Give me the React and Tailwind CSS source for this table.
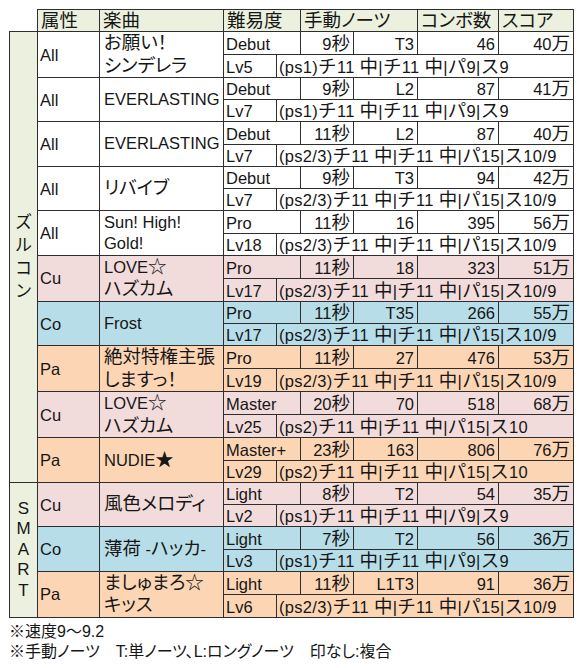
import React from 'react';

// cell fill per attribute
const FILL = {
  All: 'bg-white',
  Cu: 'bg-[#f2dcdb]',
  Co: 'bg-[#b7dee8]',
  Pa: 'bg-[#fcd5b4]',
};

const PS1 = '(ps1)チ11 中|チ11 中|パ9|ス9';
const PS23 = '(ps2/3)チ11 中|チ11 中|パ15|ス10/9';
const PS2 = '(ps2)チ11 中|チ11 中|パ15|ス10';

const ROWS = [
  { attr: 'All', song: ['お願い！', 'シンデレラ'], diff: 'Debut', sec: '9秒', notes: 'T3', combo: '46', score: '40万', lv: 'Lv5', memo: PS1 },
  { attr: 'All', song: ['EVERLASTING'], diff: 'Debut', sec: '9秒', notes: 'L2', combo: '87', score: '41万', lv: 'Lv7', memo: PS1 },
  { attr: 'All', song: ['EVERLASTING'], diff: 'Debut', sec: '11秒', notes: 'L2', combo: '87', score: '40万', lv: 'Lv7', memo: PS23 },
  { attr: 'All', song: ['リバイブ'], diff: 'Debut', sec: '9秒', notes: 'T3', combo: '94', score: '42万', lv: 'Lv7', memo: PS23 },
  { attr: 'All', song: ['Sun! High!', 'Gold!'], diff: 'Pro', sec: '11秒', notes: '16', combo: '395', score: '56万', lv: 'Lv18', memo: PS23 },
  { attr: 'Cu', song: ['LOVE☆', 'ハズカム'], diff: 'Pro', sec: '11秒', notes: '18', combo: '323', score: '51万', lv: 'Lv17', memo: PS23 },
  { attr: 'Co', song: ['Frost'], diff: 'Pro', sec: '11秒', notes: 'T35', combo: '266', score: '55万', lv: 'Lv17', memo: PS23 },
  { attr: 'Pa', song: ['絶対特権主張', 'しますっ！'], diff: 'Pro', sec: '11秒', notes: '27', combo: '476', score: '53万', lv: 'Lv19', memo: PS23 },
  { attr: 'Cu', song: ['LOVE☆', 'ハズカム'], diff: 'Master', sec: '20秒', notes: '70', combo: '518', score: '68万', lv: 'Lv25', memo: PS2 },
  { attr: 'Pa', song: ['NUDIE★'], diff: 'Master+', sec: '23秒', notes: '163', combo: '806', score: '76万', lv: 'Lv29', memo: PS2 },
  { attr: 'Cu', song: ['風色メロディ'], diff: 'Light', sec: '8秒', notes: 'T2', combo: '54', score: '35万', lv: 'Lv2', memo: PS1 },
  { attr: 'Co', song: ['薄荷 -ハッカ-'], diff: 'Light', sec: '7秒', notes: 'T2', combo: '56', score: '36万', lv: 'Lv3', memo: PS1 },
  { attr: 'Pa', song: ['ましゅまろ☆', 'キッス'], diff: 'Light', sec: '11秒', notes: 'L1T3', combo: '91', score: '36万', lv: 'Lv6', memo: PS23 },
];

const CJK = /([\u3000-\u30ff\u4e00-\u9fff\uff01-\uff5e☆★※]+)/;

// Japanese runs are set a bit larger than the latin ones, like the sheet's font
function T({ children, palt = false }) {
  return String(children)
    .split(CJK)
    .filter(Boolean)
    .map((part, i) =>
      CJK.test(part) ? (
        palt ? (
          <span key={i} className="text-[18.5px] [font-feature-settings:'palt']">{part}</span>
        ) : (
          <span key={i} className="text-[18.5px]">{part}</span>
        )
      ) : (
        <span key={i}>{part}</span>
      )
    );
}

const cell = 'border border-[#2e2e2e] px-[3px] py-0 whitespace-nowrap';

function SideLabel({ chars, leading }) {
  return (
    <div className={`flex flex-col items-center ${leading}`}>
      {chars.map((c, i) => (
        <span key={i}>{c}</span>
      ))}
    </div>
  );
}

export default function App() {
  return (
    <div className="w-[580px] h-[668px] bg-white pt-[9px] pl-[9px] text-[#161616] font-['Liberation_Sans','Noto_Sans_CJK_JP',sans-serif]">
      <table className="border-collapse table-fixed w-[564px] text-[16.5px] leading-[20px]">
        <colgroup>
          <col className="w-[28px]" />
          <col className="w-[62px]" />
          <col className="w-[124px]" />
          <col className="w-[53px]" />
          <col className="w-[24px]" />
          <col className="w-[53px]" />
          <col className="w-[64px]" />
          <col className="w-[81px]" />
          <col className="w-[75px]" />
        </colgroup>
        <thead>
          <tr className="h-[22px] bg-[#ebf1de]">
            <td className="bg-white p-0" />
            <td className={`${cell} text-left`}><T palt>属性</T></td>
            <td className={`${cell} text-left`}><T palt>楽曲</T></td>
            <td colSpan={2} className={`${cell} text-left`}><T palt>難易度</T></td>
            <td colSpan={2} className={`${cell} text-left`}><T palt>手動ノーツ</T></td>
            <td className={`${cell} text-left`}><T palt>コンボ数</T></td>
            <td className={`${cell} text-left`}><T palt>スコア</T></td>
          </tr>
        </thead>
        <tbody>
          {ROWS.map((r, i) => {
            const fill = FILL[r.attr];
            return (
              <React.Fragment key={i}>
                <tr className={`h-[22.3px] ${fill}`}>
                  {i === 0 && (
                    <td rowSpan={20} className="border border-[#2e2e2e] bg-[#ebf1de] p-0 align-middle text-[17px]">
                      <SideLabel chars={['ズ', 'ル', 'コ', 'ン']} leading="leading-[23px]" />
                    </td>
                  )}
                  {i === 10 && (
                    <td rowSpan={6} className="border border-[#2e2e2e] bg-[#ebf1de] p-0 align-middle text-[17px]">
                      <SideLabel chars={['S', 'M', 'A', 'R', 'T']} leading="leading-[20.5px]" />
                    </td>
                  )}
                  <td rowSpan={2} className={`${cell} align-middle pl-[2px]`}>{r.attr}</td>
                  <td rowSpan={2} className={`${cell} align-middle pl-[4px] leading-[21.5px]`}>
                    {r.song.map((s, k) => (
                      <div key={k}><T palt>{s}</T></div>
                    ))}
                  </td>
                  <td colSpan={2} className={`${cell} align-bottom pl-[2px]`}>{r.diff}</td>
                  <td className={`${cell} align-bottom text-right`}><T>{r.sec}</T></td>
                  <td className={`${cell} align-bottom text-right`}>{r.notes}</td>
                  <td className={`${cell} align-bottom text-right`}>{r.combo}</td>
                  <td className={`${cell} align-bottom text-right`}><T>{r.score}</T></td>
                </tr>
                <tr className={`h-[22.2px] ${fill}`}>
                  <td className={`${cell} align-bottom pl-[2px]`}>{r.lv}</td>
                  <td colSpan={5} className={`${cell} align-bottom pl-[2px] tracking-[0.3px]`}><T>{r.memo}</T></td>
                </tr>
              </React.Fragment>
            );
          })}
        </tbody>
      </table>
      <div className="pt-[4px] text-[16px] leading-[20px] [font-feature-settings:'palt']">
        <div>※速度9～9.2</div>
        <div>※手動ノーツ　T:単ノーツ、L:ロングノーツ　印なし:複合</div>
      </div>
    </div>
  );
}
